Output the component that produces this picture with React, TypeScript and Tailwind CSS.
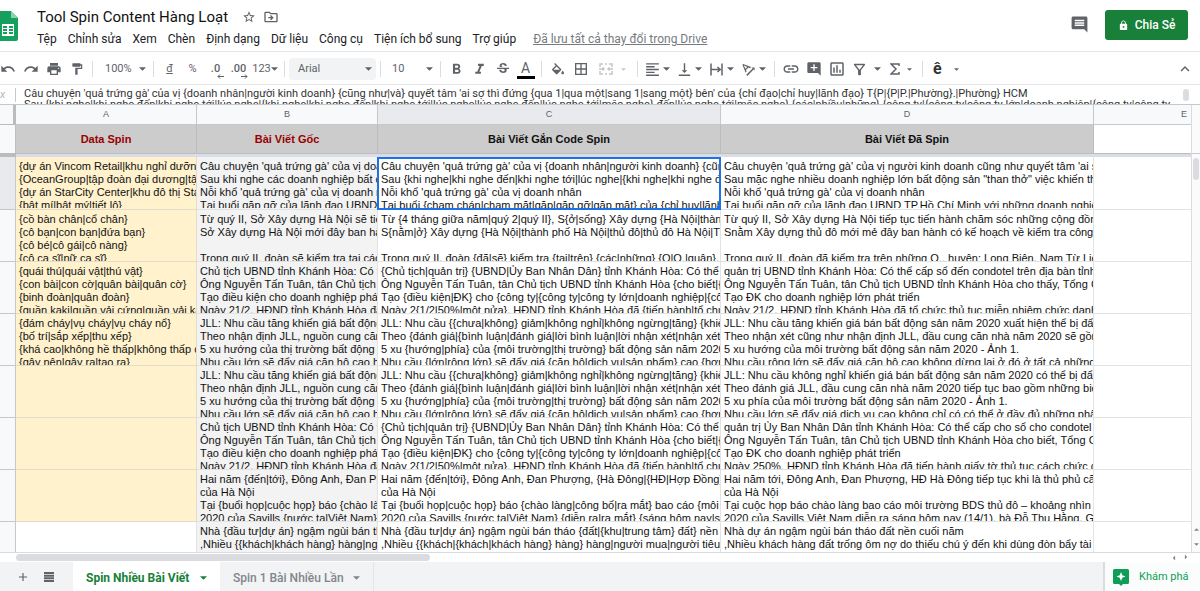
import type { ReactNode } from "react";
import {
  MdAddComment,
  MdBorderAll,
  MdFormatAlignLeft,
  MdFormatBold,
  MdFormatItalic,
  MdFormatPaint,
  MdInsertLink,
  MdLock,
  MdOutlineDriveFileMove,
  MdOutlineFilterAlt,
  MdOutlineInsertChart,
  MdPrint,
  MdStarBorder,
  MdStrikethroughS,
  MdTextRotationAngleup,
  MdVerticalAlignBottom,
  MdComment,
  MdAdd,
  MdKeyboardArrowUp,
} from "react-icons/md";

const menus = ["Tệp", "Chỉnh sửa", "Xem", "Chèn", "Định dạng", "Dữ liệu", "Công cụ", "Tiện ích bổ sung", "Trợ giúp"];

const formula = `Câu chuyện 'quả trứng gà' của vị {doanh nhân|người kinh doanh} {cũng như|và} quyết tâm 'ai sợ thì đứng {qua 1|qua một|sang 1|sang một} bên' của {chỉ đạo|chỉ huy|lãnh đạo} T{P|{P|P.|Phường}.|Phường} HCM
Sau {khi nghe|khi nghe đến|khi nghe tới|lúc nghe|{khi nghe|khi nghe đến|khi nghe tới|lúc nghe|lúc nghe đến|lúc nghe tới|mặc nghe} đến|lúc nghe tới|mặc nghe} {các|nhiều|những} {công ty|{công ty|công ty lớn|doanh nghiệp|{công ty|công ty`;

// one entry per sheet row, columns A to D
const rows = [
  [
    "{dự án Vincom Retail|khu nghỉ dưỡng\n{OceanGroup|tập đoàn đại dương|tập đoàn\n{dự án StarCity Center|khu đô thị StarCity\n{bật mí|bật mý|tiết lộ}",
    "Câu chuyện 'quả trứng gà' của vị doanh nhân\nSau khi nghe các doanh nghiệp bất động sản\nNỗi khổ 'quả trứng gà' của vị doanh nhân\nTại buổi gặp gỡ của lãnh đạo UBND TP",
    "Câu chuyện 'quả trứng gà' của vị {doanh nhân|người kinh doanh} {cũng như\nSau {khi nghe|khi nghe đến|khi nghe tới|lúc nghe|{khi nghe|khi nghe đến\nNỗi khổ 'quả trứng gà' của vị doanh nhân\nTại buổi {chạm chán|chạm mặt|gặp|gặp gỡ|gặp mặt} của {chỉ huy|lãnh đạo",
    "Câu chuyện 'quả trứng gà' của vị người kinh doanh cũng như quyết tâm 'ai sợ\nSau mặc nghe nhiều doanh nghiệp lớn bất động sản \"than thở\" việc khiến thủ\nNỗi khổ 'quả trứng gà' của vị doanh nhân\nTại buổi gặp gỡ của lãnh đạo UBND TP.Hồ Chí Minh với những doanh nghiệp",
  ],
  [
    "{cồ bàn chân|cổ chân}\n{cô bạn|con bạn|đứa bạn}\n{cô bé|cô gái|cô nàng}\n{cô ca sĩ|nữ ca sĩ}",
    "Từ quý II, Sở Xây dựng Hà Nội sẽ tiến hành\nSở Xây dựng Hà Nội mới đây ban hành\n\nTrong quý II, đoàn sẽ kiểm tra tại các Q",
    "Từ {4 tháng giữa năm|quý 2|quý II}, S{ở|sống} Xây dựng {Hà Nội|thành phố\nS{nằm|ở} Xây dựng {Hà Nội|thành phố Hà Nội|thủ đô|thủ đô Hà Nội|TP\n\nTrong quý II, đoàn {đã|sẽ} kiểm tra {tại|trên} {các|những} {Q|Q.|quận}, huyện",
    "Từ quý II, Sở Xây dựng Hà Nội tiếp tục tiến hành chăm sóc những cộng đồng\nSnằm Xây dựng thủ đô mới mẻ đây ban hành có kế hoạch về kiểm tra công tác\n\nTrong quý II, đoàn đã kiểm tra trên những Q., huyện: Long Biên, Nam Từ Liêm",
  ],
  [
    "{quái thú|quái vật|thú vật}\n{con bài|con cờ|quân bài|quân cờ}\n{binh đoàn|quân đoàn}\n{quần kaki|quần vải cứng|quần vải kaki",
    "Chủ tịch UBND tỉnh Khánh Hòa: Có thể\nÔng Nguyễn Tấn Tuân, tân Chủ tịch UBND\nTạo điều kiện cho doanh nghiệp phát triển\nNgày 21/2, HĐND tỉnh Khánh Hòa đã tổ",
    "{Chủ tịch|quản trị} {UBND|Ủy Ban Nhân Dân} tỉnh Khánh Hòa: Có thể {cấp\nÔng Nguyễn Tấn Tuân, tân Chủ tịch UBND tỉnh Khánh Hòa {cho biết|{cho\nTạo {điều kiện|ĐK} cho {công ty|{công ty|công ty lớn|doanh nghiệp|{công\nNgày 2{1/2|50%|một nửa}, HĐND tỉnh Khánh Hòa đã {tiến hành|tổ chức}",
    "quản trị UBND tỉnh Khánh Hòa: Có thể cấp sổ đến condotel trên địa bàn tỉnh\nÔng Nguyễn Tấn Tuân, tân Chủ tịch UBND tỉnh Khánh Hòa cho thấy, Tổng Cục\nTạo ĐK cho doanh nghiệp lớn phát triển\nNgày 21/2, HĐND tỉnh Khánh Hòa đã tổ chức thủ tục miễn nhiệm chức danh Chủ",
  ],
  [
    "{đám cháy|vụ cháy|vụ cháy nổ}\n{bố trí|sắp xếp|thu xếp}\n{khá cao|không hề thấp|không thấp chút\n{gây nên|gây ra|tạo ra}",
    "JLL: Nhu cầu tăng khiến giá bất động sản\nTheo nhận định JLL, nguồn cung căn hộ\n5 xu hướng của thị trường bất động sản\nNhu cầu lớn sẽ đẩy giá căn hộ cao hơn",
    "JLL: Nhu cầu {{chưa|không} giảm|không nghỉ|không ngừng|tăng} {khiến\nTheo {đánh giá|{bình luận|đánh giá|lời bình luận|lời nhận xét|nhận xét} {cũng\n5 xu {hướng|phía} của {môi trường|thị trường} bất động sản năm 2020 - Ảnh\nNhu cầu {lớn|rộng lớn} sẽ đẩy giá {căn hộ|dịch vụ|sản phẩm} cao {hơn nữa",
    "JLL: Nhu cầu tăng khiến giá bán bất động sản năm 2020 xuất hiện thể bị đẩy cao\nTheo nhận xét cũng như nhận định JLL, đầu cung căn nhà năm 2020 sẽ gồm\n5 xu hướng của môi trường bất động sản năm 2020 - Ảnh 1.\nNhu cầu rộng lớn sẽ đẩy giá căn hộ cao không dừng lại ở đó ở tất cả những phân",
  ],
  [
    "",
    "JLL: Nhu cầu tăng khiến giá bất động sản\nTheo nhận định JLL, nguồn cung căn hộ\n5 xu hướng của thị trường bất động sản\nNhu cầu lớn sẽ đẩy giá căn hộ cao hơn",
    "JLL: Nhu cầu {{chưa|không} giảm|không nghỉ|không ngừng|tăng} {khiến\nTheo {đánh giá|{bình luận|đánh giá|lời bình luận|lời nhận xét|nhận xét} {cũng\n5 xu {hướng|phía} của {môi trường|thị trường} bất động sản năm 2020 - Ảnh\nNhu cầu {lớn|rộng lớn} sẽ đẩy giá {căn hộ|dịch vụ|sản phẩm} cao {hơn nữa",
    "JLL: Nhu cầu không nghỉ khiến giá bán bất động sản năm 2020 có thể bị đẩy cao\nTheo đánh giá JLL, đầu cung căn nhà năm 2020 tiếp tục bao gồm những biến\n5 xu phía của môi trường bất động sản năm 2020 - Ảnh 1.\nNhu cầu lớn sẽ đẩy giá dịch vụ cao không chỉ có có thể ở đầy đủ những phân",
  ],
  [
    "",
    "Chủ tịch UBND tỉnh Khánh Hòa: Có thể\nÔng Nguyễn Tấn Tuân, tân Chủ tịch UBND\nTạo điều kiện cho doanh nghiệp phát triển\nNgày 21/2, HĐND tỉnh Khánh Hòa đã tổ",
    "{Chủ tịch|quản trị} {UBND|Ủy Ban Nhân Dân} tỉnh Khánh Hòa: Có thể {cấp\nÔng Nguyễn Tấn Tuân, tân Chủ tịch UBND tỉnh Khánh Hòa {cho biết|{cho\nTạo {điều kiện|ĐK} cho {công ty|{công ty|công ty lớn|doanh nghiệp|{công\nNgày 2{1/2|50%|một nửa}, HĐND tỉnh Khánh Hòa đã {tiến hành|tổ chức}",
    "quản trị Ủy Ban Nhân Dân tỉnh Khánh Hòa: Có thể cấp cho sổ cho condotel trên\nÔng Nguyễn Tấn Tuân, tân Chủ tịch UBND tỉnh Khánh Hòa cho biết, Tổng Cục\nTạo ĐK cho doanh nghiệp phát triển\nNgày 250%, HĐND tỉnh Khánh Hòa đã tiến hành giấy tờ thủ tục cách chức chức",
  ],
  [
    "",
    "Hai năm {đến|tới}, Đông Anh, Đan Phượng\ncủa Hà Nội\nTại {buổi họp|cuộc họp} báo {chào làng\n2020 của Savills {nước ta|Việt Nam} {diễn",
    "Hai năm {đến|tới}, Đông Anh, Đan Phượng, {Hà Đông|{HĐ|Hợp Đồng} Hà\ncủa Hà Nội\nTại {buổi họp|cuộc họp} báo {chào làng|công bố|ra mắt} bao cáo {môi trường\n2020 của Savills {nước ta|Việt Nam} {diễn ra|ra mắt} {sáng hôm nay|sáng",
    "Hai năm tới, Đông Anh, Đan Phượng, HĐ Hà Đông tiếp tục khi là thủ phủ căn hộ\ncủa Hà Nội\nTại cuộc họp báo chào làng bao cáo môi trường BDS thủ đô – khoảng nhìn\n2020 của Savills Việt Nam diễn ra sáng hôm nay (14/1), bà Đỗ Thu Hằng, Giám",
  ],
  [
    "",
    "Nhà {đầu tư|dự án} ngậm ngùi bán tháo\n,Nhiều {{khách|khách hàng} hàng|người",
    "Nhà {đầu tư|dự án} ngậm ngùi bán tháo {đất|{khu|trung tâm} đất} nền cuối\n,Nhiều {{khách|{khách|khách hàng} hàng} hàng|người mua|người tiêu dùng",
    "Nhà dự án ngậm ngùi bán tháo đất nền cuối năm\n,Nhiều khách hàng đất trống ôm nợ do thiếu chú ý đến khi dùng đòn bẩy tài",
  ],
];

function Caret({ small = false }: { small?: boolean }) {
  return (
    <svg viewBox="0 0 8 4" className={small ? "w-[5px] h-[3px] shrink-0" : "w-[7px] h-[4px] shrink-0"} aria-hidden="true">
      <path d="M0 0h8L4 4z" fill="currentColor" />
    </svg>
  );
}

function Glyph({ d, className = "w-4 h-4" }: { d: string; className?: string }) {
  return (
    <svg viewBox="0 0 24 24" className={`shrink-0 ${className}`} fill="currentColor" aria-hidden="true">
      <path d={d} />
    </svg>
  );
}

function Sep() {
  return <div className="w-px h-4 mx-1 bg-[#dadce0] shrink-0" />;
}

function Tool({ label, children }: { label: string; children: ReactNode }) {
  return (
    <button aria-label={label} className="w-[23px] h-6 shrink-0 flex items-center justify-center">
      {children}
    </button>
  );
}

function DropTool({ label, children }: { label: string; children: ReactNode }) {
  return (
    <button aria-label={label} className="w-8 h-6 shrink-0 flex items-center gap-0.5 pl-0.5">
      {children}
      <Caret />
    </button>
  );
}

function Header() {
  return (
    <header className="flex h-[52px] shrink-0 items-start border-b border-[#e4e5e7]">
      <svg viewBox="0 0 18 30" className="w-[18px] h-[30px] mt-[11px] shrink-0" role="img" aria-label="Trang tính">
        <path d="M0 0h11l7 7v21a2 2 0 0 1-2 2H0z" fill="#17a05d" />
        <path d="M11 0l7 7h-7z" fill="#8ed1b1" />
        <path d="M2 13h12v12H2z" fill="#fff" />
        <path d="M3 15h4v2H3zM9 15h4v2H9zM3 18h4v2H3zM9 18h4v2H9zM3 21h4v2H3zM9 21h4v2H9z" fill="#17a05d" />
      </svg>
      <div className="flex-1 min-w-0 pl-[19px] pt-2">
        <div className="flex items-center h-[18px] text-[#5f6368]">
          <h1 className="text-[15px] text-[#111] whitespace-nowrap">Tool Spin Content Hàng Loạt</h1>
          <button aria-label="Gắn dấu sao" className="ml-3.5">
            <MdStarBorder size={14} />
          </button>
          <button aria-label="Di chuyển" className="ml-[7px]">
            <MdOutlineDriveFileMove size={16} />
          </button>
        </div>
        <nav className="flex items-center gap-[11px] h-4 mt-[5px] text-[12px] text-[#202124] whitespace-nowrap">
          {menus.map((m) => (
            <button key={m}>{m}</button>
          ))}
          <a href="#" className="ml-1.5 underline text-[#777b80]">
            Đã lưu tất cả thay đổi trong Drive
          </a>
        </nav>
      </div>
      <button aria-label="Nhận xét" className="mt-[15px] mr-4 text-[#5f6368]">
        <MdComment size={19} />
      </button>
      <button className="mt-2.5 mr-3 h-[30px] w-[83px] rounded-[3px] bg-[#188038] text-white text-[12px] font-medium flex items-center justify-center gap-1.5">
        <MdLock size={11} />
        Chia Sẻ
      </button>
    </header>
  );
}

function Toolbar() {
  return (
    <div className="flex h-[33px] shrink-0 items-center pt-0.5 -ml-1 border-b border-[#e4e5e7] text-[11px] text-[#5f6368]">
      <Tool label="Hoàn tác">
        <Glyph d="M12.5 8c-2.650 0-5.050.99-6.900 2.600L2 7v9h9l-3.620-3.620c1.390-1.160 3.160-1.880 5.120-1.880 3.540 0 6.550 2.310 7.600 5.500l2.370-.78C21.080 11.030 17.150 8 12.500 8z" />
      </Tool>
      <Tool label="Làm lại">
        <Glyph d="M18.400 10.600C16.550 8.990 14.150 8 11.500 8c-4.650 0-8.580 3.030-9.960 7.220L3.900 16c1.050-3.190 4.050-5.500 7.600-5.500 1.950 0 3.730.72 5.120 1.880L13 16h9V7l-3.600 3.600z" />
      </Tool>
      <Tool label="In"><MdPrint size={16} /></Tool>
      <Tool label="Sao chép định dạng"><MdFormatPaint size={14} /></Tool>
      <Sep />
      <label className="flex items-center w-[52px] pl-2 pr-[3px] shrink-0">
        <select aria-label="Thu phóng" className="appearance-none flex-1 min-w-0">
          <option>100%</option>
        </select>
        <Caret />
      </label>
      <Sep />
      <Tool label="Tiền tệ"><span className="underline">đ</span></Tool>
      <Tool label="Phần trăm"><span>%</span></Tool>
      <Tool label="Giảm số thập phân">
        <span className="relative font-medium">
          .0
          <svg viewBox="0 0 7 5" className="absolute -right-1 -bottom-0.5 w-[7px] h-[5px]" aria-hidden="true">
            <path d="M7 2.500H1M3 .5l-2 2 2 2" fill="none" stroke="currentColor" />
          </svg>
        </span>
      </Tool>
      <Tool label="Tăng số thập phân">
        <span className="relative font-medium">
          .00
          <svg viewBox="0 0 7 5" className="absolute -right-0.5 -bottom-0.5 w-[7px] h-[5px]" aria-hidden="true">
            <path d="M0 2.500h6M4 .5l2 2-2 2" fill="none" stroke="currentColor" />
          </svg>
        </span>
      </Tool>
      <button className="w-[30px] h-6 shrink-0 flex items-center justify-center">
        123
        <Caret />
      </button>
      <Sep />
      <label className="flex items-center w-[87px] h-[22px] pl-[9px] pr-1 shrink-0 rounded-sm bg-[#f1f3f4]">
        <select aria-label="Phông chữ" className="appearance-none flex-1 min-w-0">
          <option>Arial</option>
        </select>
        <Caret />
      </label>
      <Sep />
      <label className="flex items-center w-[51px] pl-[7px] pr-[3px] shrink-0">
        <select aria-label="Cỡ chữ" className="appearance-none flex-1 min-w-0">
          <option>10</option>
        </select>
        <Caret />
      </label>
      <Sep />
      <Tool label="In đậm"><MdFormatBold size={17} /></Tool>
      <Tool label="In nghiêng"><MdFormatItalic size={17} /></Tool>
      <Tool label="Gạch ngang"><MdStrikethroughS size={16} /></Tool>
      <Tool label="Màu văn bản">
        <span className="w-[18px] border-b-[3px] border-black text-[14px] leading-4">A</span>
      </Tool>
      <Sep />
      <Tool label="Màu nền">
        <Glyph d="M16.560 8.940L7.620 0 6.210 1.410l2.380 2.380-5.150 5.150a1.490 1.490 0 0 0 0 2.120l5.500 5.500c.29.29.68.44 1.060.44s.77-.15 1.060-.44l5.500-5.500c.59-.58.59-1.530 0-2.120zM5.210 10L10 5.210 14.790 10H5.210zM19 11.500s-2 2.170-2 3.500c0 1.100.9 2 2 2s2-.9 2-2c0-1.330-2-3.500-2-3.500z" className="w-4 h-4 mt-1" />
      </Tool>
      <Tool label="Đường viền"><MdBorderAll size={16} /></Tool>
      <button aria-label="Hợp nhất ô" className="w-[41px] h-6 shrink-0 flex items-center justify-center gap-2 text-[#c4c7ca]">
        <svg viewBox="0 0 14 12" className="w-[14px] h-3" fill="none" stroke="currentColor" strokeWidth="1.5" aria-hidden="true">
          <path d="M1 4V1h3M6 1h2M10 1h3v3M1 8v3h3M6 11h2M10 11h3V8M0 6h5M3.500 4.500L5 6 3.500 7.500M14 6H9M10.500 4.500L9 6l1.500 1.500" />
        </svg>
        <Caret small />
      </button>
      <Sep />
      <DropTool label="Căn ngang"><MdFormatAlignLeft size={17} /></DropTool>
      <DropTool label="Căn dọc"><MdVerticalAlignBottom size={17} /></DropTool>
      <DropTool label="Xuống dòng">
        <svg viewBox="0 0 17 17" className="w-[17px] h-[17px] shrink-0" fill="none" stroke="currentColor" strokeWidth="1.500" aria-hidden="true">
          <path d="M3 2.500v12M14 2.500v12M3 8.500h10M9.500 6L12 8.500 9.500 11" />
        </svg>
      </DropTool>
      <DropTool label="Xoay văn bản"><MdTextRotationAngleup size={17} /></DropTool>
      <Sep />
      <Tool label="Chèn liên kết"><MdInsertLink size={18} /></Tool>
      <Tool label="Chèn nhận xét"><MdAddComment size={16} /></Tool>
      <Tool label="Chèn biểu đồ"><MdOutlineInsertChart size={18} /></Tool>
      <button aria-label="Bộ lọc" className="w-[38px] h-6 shrink-0 flex items-center gap-1.5 pl-[3px]">
        <MdOutlineFilterAlt size={17} />
        <Caret />
      </button>
      <button aria-label="Hàm" className="w-8 h-6 shrink-0 flex items-center gap-[7px] pl-1">
        <svg viewBox="0 0 10 12" className="w-2.5 h-3 shrink-0" fill="none" stroke="currentColor" strokeWidth="1.500" aria-hidden="true">
          <path d="M9 3V1H1l5 5-5 5h8V9" />
        </svg>
        <Caret small />
      </button>
      <Sep />
      <button aria-label="Phương thức nhập" className="w-[38px] h-6 shrink-0 flex items-center gap-3 pl-1.5 text-[16px] font-bold">
        <span className="text-[#333]">ê</span>
        <Caret small />
      </button>
      <button aria-label="Ẩn menu" className="ml-auto mr-1.5">
        <MdKeyboardArrowUp size={18} />
      </button>
    </div>
  );
}

function HeadCell({ children, selected = false }: { children: ReactNode; selected?: boolean }) {
  return (
    <th
      scope="col"
      className={`h-5 border-r border-b border-[#c6c9cc] text-[9px] font-normal text-[#5f6368] ${selected ? "bg-[#e8eaed]" : "bg-[#f8f9fa]"}`}
    >
      {children}
    </th>
  );
}

function Cell({ text, className, selected = false }: { text: string; className: string; selected?: boolean }) {
  return (
    <td className={`relative border-r border-b p-0 align-top ${className}`}>
      <div className="h-[51px] overflow-hidden whitespace-pre pl-[3px] pt-[3px]">{text}</div>
      {selected && (
        <div className="absolute -inset-px top-0 border-2 border-[#1a73e8]">
          <div className="absolute -right-1 -bottom-1 w-1.5 h-1.5 bg-[#1a73e8]" />
        </div>
      )}
    </td>
  );
}

function Sheet() {
  return (
    <div className="flex flex-1 min-h-0">
      <div className="flex-1 min-w-0 overflow-hidden">
        <table className="table-fixed w-[1275px] border-separate border-spacing-0 font-['Liberation_Sans',Arial,sans-serif] text-[11px] leading-[13px] text-[#111]">
          <colgroup>
            <col className="w-4" />
            <col className="w-[181px]" />
            <col className="w-[181px]" />
            <col className="w-[343px]" />
            <col className="w-[373px]" />
            <col className="w-[181px]" />
          </colgroup>
          <thead>
            <tr>
              <td className="border-r-[3px] border-b border-[#bcbcbc] bg-[#f8f9fa]" />
              <HeadCell>A</HeadCell>
              <HeadCell>B</HeadCell>
              <HeadCell selected>C</HeadCell>
              <HeadCell>D</HeadCell>
              <HeadCell>E</HeadCell>
            </tr>
            <tr>
              <td className="h-7 border-r border-[#c0c0c0] bg-[#f8f9fa]" />
              <th className="border-r border-[#bdbdbd] bg-[#cccccc] text-[#990000]">Data Spin</th>
              <th className="border-r border-[#bdbdbd] bg-[#cccccc] text-[#990000]">Bài Viết Gốc</th>
              <th className="border-r border-[#bdbdbd] bg-[#cccccc]">Bài Viết Gắn Code Spin</th>
              <th className="border-r border-[#bdbdbd] bg-[#cccccc]">Bài Viết Đã Spin</th>
              <td className="bg-white" />
            </tr>
            <tr>
              <td className="h-1 p-0 bg-[#bcbcbc]" />
              <td colSpan={5} className="h-1 p-0 border-t border-[#bdbdbd] bg-[#d9dde8]" />
            </tr>
          </thead>
          <tbody>
            {rows.map(([a, b, c, d], i) => (
              <tr key={i}>
                <td className={`border-r border-b border-[#c6c9cc] ${i === 0 ? "h-[53px] bg-[#e8eaed]" : "bg-[#f8f9fa]"}`} />
                <Cell text={a} className={i < 7 ? "bg-[#fff2cc] border-[#e2ddcb]" : "bg-white border-[#e2e3e3]"} />
                <Cell text={b} className="bg-[#f3f3f3] border-[#e2e3e3]" />
                <Cell text={c} className="bg-white border-[#e2e3e3]" selected={i === 0} />
                <Cell text={d} className="bg-white border-[#e2e3e3]" />
                <td className="border-r border-b border-[#e2e3e3]" />
              </tr>
            ))}
          </tbody>
        </table>
      </div>
      {/* Vertical scrollbar */}
      <div className="w-[9px] shrink-0 flex flex-col items-center border-l border-[#dadce0] bg-[#fbfbfb] text-[#80868b]">
        <div className="h-[49px] self-stretch border-b border-[#c6c9cc]" />
        <div className="mt-1 w-1.5 h-[22px] rounded-full bg-[#dadce0]" />
        <button aria-label="Cuộn lên" className="mt-auto h-3 flex items-center rotate-180"><Caret small /></button>
        <button aria-label="Cuộn xuống" className="h-4 flex items-center"><Caret small /></button>
      </div>
    </div>
  );
}

function SheetTabs() {
  return (
    <footer className="flex h-[29px] shrink-0 items-stretch bg-[#f1f3f4] text-[12px] font-medium whitespace-nowrap">
      <button aria-label="Thêm trang tính" className="w-[30px] ml-2 flex items-center justify-center text-[#5f6368]">
        <MdAdd size={14} />
      </button>
      <button aria-label="Tất cả trang tính" className="w-[22px] mr-[13px] flex items-center justify-center text-[#5f6368]">
        <svg viewBox="0 0 10 10" className="w-2.5 h-2.5" aria-hidden="true">
          <path d="M0 0h10v2H0zM0 2.700h10v2H0zM0 5.300h10v2H0zM0 8h10v2H0z" fill="currentColor" />
        </svg>
      </button>
      <button className="flex items-center justify-between w-[147px] px-[13px] pt-0.5 bg-white font-bold text-[#188038]">
        Spin Nhiều Bài Viết
        <Caret />
      </button>
      <button className="flex items-center justify-between w-[154px] px-[13px] pt-0.5 border-r border-[#e4e5e7] text-[#80868b]">
        Spin 1 Bài Nhiều Lần
        <Caret />
      </button>
      <button className="ml-auto w-[97px] flex items-center gap-2.5 pl-2 pt-0.5 border-l-2 border-[#dadce0] bg-[#fbfcfc] text-[11px] font-normal text-[#0f9d58]">
        <svg viewBox="0 0 16 17" className="w-4 h-[17px]" aria-hidden="true">
          <path d="M1.500 0h13A1.500 1.500 0 0 1 16 1.500v12a1.500 1.500 0 0 1-1.500 1.500H10l-2 2-2-2H1.500A1.500 1.500 0 0 1 0 13.500v-12A1.500 1.500 0 0 1 1.500 0z" fill="#0f9d58" />
          <path d="M8 3l1.300 3.200L12.500 7.500 9.300 8.800 8 12 6.700 8.800 3.500 7.500l3.200-1.300z" fill="#fff" />
        </svg>
        Khám phá
      </button>
    </footer>
  );
}

export default function App() {
  return (
    <div className="flex flex-col h-screen overflow-hidden bg-white font-[Roboto,'Liberation_Sans',sans-serif]">
      <Header />
      <Toolbar />
      {/* Formula bar */}
      <div className="flex h-5 shrink-0 items-start border-b border-[#c6c9cc]">
        <div className="w-4 h-3.5 mt-[3px] mr-2 shrink-0 border-r border-[#c6c9cc] text-[11px] leading-[13px] italic text-[#b4b7ba]">x</div>
        <textarea
          aria-label="Thanh công thức"
          wrap="off"
          readOnly
          value={formula}
          className="flex-1 min-w-0 h-[19px] pt-[3px] resize-none overflow-hidden outline-none text-[11px] leading-[11px] text-[#333]"
        />
        <div className="w-1.5 h-3 mt-1 mr-[11px] rounded-full bg-[#dadce0]" />
      </div>
      <Sheet />
      {/* Horizontal scrollbar */}
      <div className="flex h-2.5 shrink-0 items-center border-t border-[#dadce0] bg-white pl-4 text-[#80868b]">
        <div className="w-[35%] h-[7px] rounded-full bg-[#dadce0]" />
        <button aria-label="Cuộn trái" className="ml-auto w-3 flex justify-center rotate-90"><Caret small /></button>
        <button aria-label="Cuộn phải" className="w-3 mr-2 flex justify-center -rotate-90"><Caret small /></button>
      </div>
      <SheetTabs />
    </div>
  );
}
